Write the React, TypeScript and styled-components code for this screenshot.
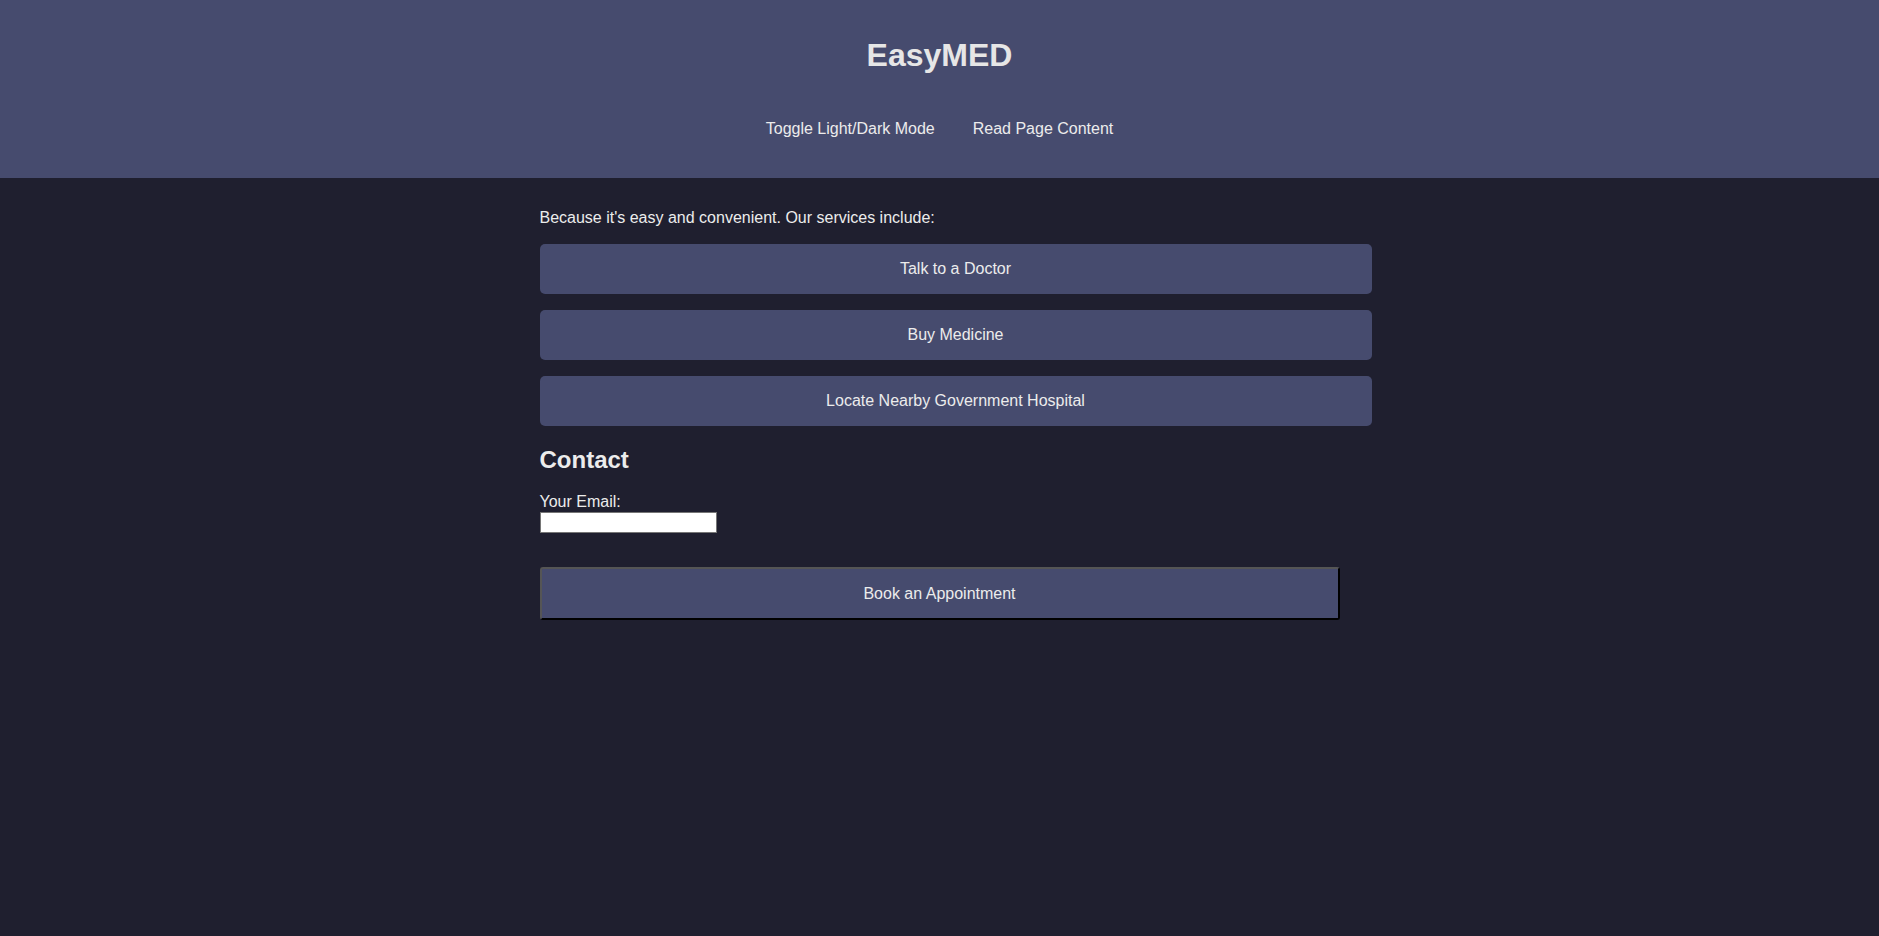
import React from "react";
import styled, { createGlobalStyle } from "styled-components";

const GlobalStyle = createGlobalStyle`
  html, body {
    margin: 0;
    padding: 0;
    background: #1f1f2f;
    color: #ececec;
    font-family: "Liberation Sans", Arial, sans-serif;
    font-size: 16px;
  }
`;

const Header = styled.header`
  background: #464b6e;
  padding: 37px 0 40px;
  text-align: center;
`;

const Title = styled.h1`
  margin: 0 0 47px;
  font-size: 32px;
  line-height: 36px;
  font-weight: 700;
  color: #e6e6e6;
`;

const Nav = styled.nav`
  display: flex;
  justify-content: center;
  gap: 38px;
  line-height: 18px;
`;

const NavLink = styled.a`
  color: #ececec;
  text-decoration: none;
  cursor: pointer;
`;

const Main = styled.main`
  width: 800px;
  margin: 0 auto;
  padding-top: 31px;
`;

const Intro = styled.p`
  margin: 0 0 17px;
  line-height: 18px;
`;

const ServiceList = styled.div`
  display: flex;
  flex-direction: column;
  gap: 16px;
`;

const ServiceButton = styled.button`
  display: block;
  box-sizing: content-box;
  width: 100%;
  padding: 16px;
  height: 18px;
  line-height: 18px;
  border: none;
  border-radius: 5px;
  background: #464b6e;
  color: #ececec;
  font-family: inherit;
  font-size: 16px;
  text-align: center;
  cursor: pointer;
`;

const Heading = styled.h2`
  margin: 20px 0 19px;
  font-size: 24px;
  line-height: 28px;
  font-weight: 700;
  color: #ececec;
`;

const Form = styled.form`
  display: flex;
  flex-direction: column;
  align-items: flex-start;
`;

const Label = styled.label`
  line-height: 18px;
  margin-bottom: 1px;
`;

const EmailInput = styled.input`
  box-sizing: border-box;
  width: 177px;
  height: 21px;
  margin: 0;
  border: 1px solid #767676;
  background: #ffffff;
  padding: 1px 2px;
  font-family: inherit;
  font-size: 13px;
`;

const BookButton = styled.button`
  box-sizing: border-box;
  width: 800px;
  height: 53px;
  margin-top: 34px;
  display: flex;
  align-items: center;
  justify-content: center;
  background: #464b6e;
  color: #ececec;
  font-family: inherit;
  font-size: 16px;
  line-height: 18px;
  border-style: solid;
  border-width: 2px;
  border-color: #555555 #000000 #000000 #555555;
  border-radius: 3px;
  cursor: pointer;
`;

export default function App() {
  return (
    <>
      <GlobalStyle />
      <Header>
        <Title>EasyMED</Title>
        <Nav>
          <NavLink>Toggle Light/Dark Mode</NavLink>
          <NavLink>Read Page Content</NavLink>
        </Nav>
      </Header>
      <Main>
        <Intro>Because it's easy and convenient. Our services include:</Intro>
        <ServiceList>
          <ServiceButton>Talk to a Doctor</ServiceButton>
          <ServiceButton>Buy Medicine</ServiceButton>
          <ServiceButton>Locate Nearby Government Hospital</ServiceButton>
        </ServiceList>
        <Heading>Contact</Heading>
        <Form onSubmit={(e) => e.preventDefault()}>
          <Label htmlFor="email">Your Email:</Label>
          <EmailInput id="email" type="email" />
          <BookButton type="submit">Book an Appointment</BookButton>
        </Form>
      </Main>
    </>
  );
}
